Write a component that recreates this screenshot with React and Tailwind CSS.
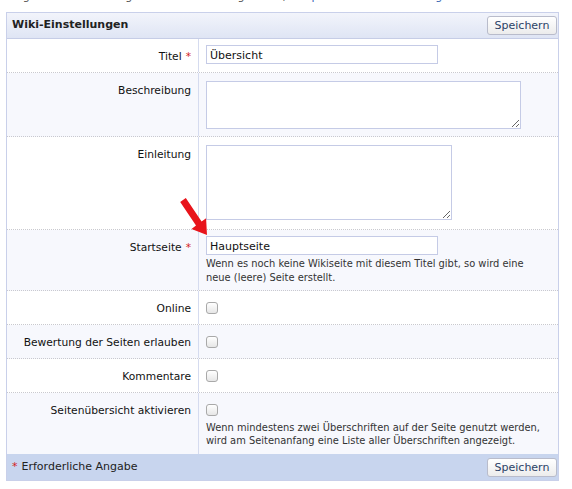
import React from "react";

const Req = () => <span className="text-[#d42020] ml-[4px]">*</span>;

const Checkbox = () => (
  <div className="w-[12px] h-[12px] rounded-[3px] border border-[#a9a9a9] bg-gradient-to-b from-white to-[#e6e6e6]" />
);

const Button = () => (
  <button className="h-[19px] w-[70px] rounded-[3px] border border-[#b9bccb] bg-gradient-to-b from-white to-[#ececec] text-[11px] leading-[17px] text-[#2b4266]">
    Speichern
  </button>
);

function Row({ label, req, h, alt, children, last }) {
  return (
    <div
      className={`flex ${h} ${alt ? "bg-[#f7f8fd]" : "bg-white"} ${last ? "" : "border-b border-dotted border-[#c9c9cf]"}`}
    >
      <div className="w-[192px] shrink-0 border-r border-[#d5dbef] pr-[7px] pt-[10px] text-right text-[10.7px] leading-[16px] text-[#111]">
        {label}
        {req && <Req />}
      </div>
      <div className="flex-1 pl-[7px]">{children}</div>
    </div>
  );
}

export default function App() {
  return (
    <div className="relative w-[572px] h-[489px] overflow-hidden bg-white font-[DejaVu_Sans,Verdana,sans-serif]">
      <div className="h-[12px] overflow-hidden">
        <div className="-mt-[10px] pl-[10px] text-[11px] leading-[14px] text-[#555] whitespace-nowrap">
          Legen Sie hier die allgemeinen Einstellungen fest, <span className="text-[#3a68b4]">Hauptseite</span> oder{" "}
          <span className="text-[#3a68b4]">Einstellungen</span>
        </div>
      </div>

      <div className="mx-[6px] w-[553px] border border-[#c9d0ea]">
        <div className="flex h-[26px] items-center justify-between border-b border-[#c6cde6] bg-gradient-to-b from-[#f2f4fb] to-[#dfe5f4] pl-[5px] pr-[1px]">
          <span className="text-[11px] font-bold text-[#222]">Wiki-Einstellungen</span>
          <Button />
        </div>

        <Row label="Titel" req h="h-[34px]">
          <input
            defaultValue="Übersicht"
            className="mt-[6px] h-[19px] w-[232px] border border-[#c5cbe6] bg-white px-[3px] pt-[2px] text-[11px] leading-[15px] text-[#111] outline-none font-[DejaVu_Sans,sans-serif]"
          />
        </Row>
        <Row label="Beschreibung" alt h="h-[64px]">
          <textarea className="mt-[8px] block h-[48px] w-[315px] border border-[#c5cbe6] bg-white outline-none" />
        </Row>
        <Row label="Einleitung" h="h-[93px]">
          <textarea className="mt-[8px] block h-[75px] w-[246px] border border-[#c5cbe6] bg-white outline-none" />
        </Row>
        <Row label="Startseite" req alt h="h-[61px]">
          <input
            defaultValue="Hauptseite"
            className="mt-[6px] block h-[19px] w-[232px] border border-[#c5cbe6] bg-white px-[3px] pt-[2px] text-[11px] leading-[15px] text-[#111] outline-none font-[DejaVu_Sans,sans-serif]"
          />
          <div className="mt-[2px] text-[9.9px] leading-[14px] text-[#333]">
            Wenn es noch keine Wikiseite mit diesem Titel gibt, so wird eine
            <br />
            neue (leere) Seite erstellt.
          </div>
        </Row>
        <Row label="Online" h="h-[34px]">
          <div className="pt-[11px]"><Checkbox /></div>
        </Row>
        <Row label="Bewertung der Seiten erlauben" alt h="h-[34px]">
          <div className="pt-[11px]"><Checkbox /></div>
        </Row>
        <Row label="Kommentare" h="h-[34px]">
          <div className="pt-[11px]"><Checkbox /></div>
        </Row>
        <Row label="Seitenübersicht aktivieren" alt h="h-[61px]" last>
          <div className="pt-[11px]"><Checkbox /></div>
          <div className="mt-[5px] text-[9.9px] leading-[13px] text-[#333]">
            Wenn mindestens zwei Überschriften auf der Seite genutzt werden,
            <br />
            wird am Seitenanfang eine Liste aller Überschriften angezeigt.
          </div>
        </Row>

        <div className="flex h-[26px] items-center justify-between bg-[#c8d5ee] pl-[5px] pr-[1px]">
          <span className="text-[11px] text-[#222]">
            <span className="text-[#d42020] mr-[4px]">*</span>Erforderliche Angabe
          </span>
          <Button />
        </div>
      </div>

      <svg className="pointer-events-none absolute left-0 top-0" width="572" height="489" viewBox="0 0 572 489">
        <polygon
          points="180.2,202 196,225.6 191.5,228.9 207,235 206.1,218.3 201.6,221.6 185.8,198"
          fill="#e8141b"
        />
      </svg>
    </div>
  );
}
